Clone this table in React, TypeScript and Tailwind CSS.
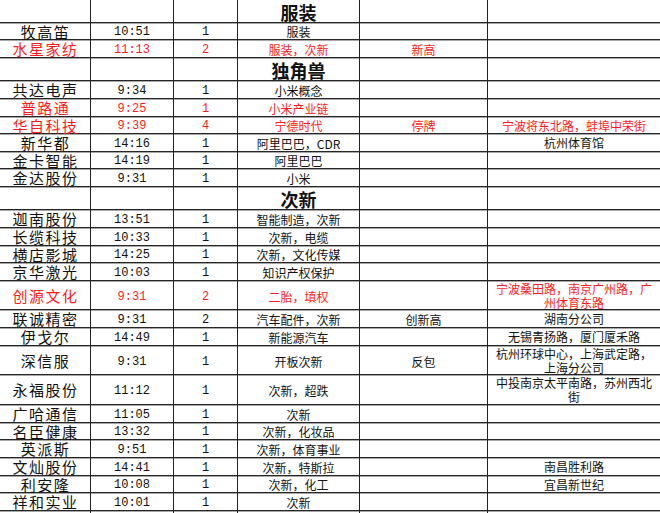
import React from "react";

type Row = {
  h: number;
  header?: string;
  name?: string;
  time?: string;
  n?: string;
  concept?: string;
  c5?: string;
  c6?: string[];
  red?: boolean;
};

const rows: Row[] = [
  { h: 23, header: "服装" },
  { h: 17, name: "牧高笛", time: "10:51", n: "1", concept: "服装" },
  { h: 18, name: "水星家纺", time: "11:13", n: "2", concept: "服装，次新", c5: "新高", red: true },
  { h: 23, header: "独角兽" },
  { h: 18, name: "共达电声", time: "9:34", n: "1", concept: "小米概念" },
  { h: 18, name: "普路通", time: "9:25", n: "1", concept: "小米产业链", red: true },
  { h: 17, name: "华自科技", time: "9:39", n: "4", concept: "宁德时代", c5: "停牌", c6: ["宁波将东北路，蚌埠中荣街"], red: true },
  { h: 18, name: "新华都", time: "14:16", n: "1", concept: "阿里巴巴，CDR", c6: ["杭州体育馆"] },
  { h: 17, name: "金卡智能", time: "14:19", n: "1", concept: "阿里巴巴" },
  { h: 18, name: "金达股份", time: "9:31", n: "1", concept: "小米" },
  { h: 23, header: "次新" },
  { h: 18, name: "迦南股份", time: "13:51", n: "1", concept: "智能制造，次新" },
  { h: 18, name: "长缆科技", time: "10:33", n: "1", concept: "次新，电缆" },
  { h: 17, name: "横店影城", time: "14:25", n: "1", concept: "次新，文化传媒" },
  { h: 18, name: "京华激光", time: "10:03", n: "1", concept: "知识产权保护" },
  { h: 29, name: "创源文化", time: "9:31", n: "2", concept: "二胎，填权", c6: ["宁波桑田路，南京广州路，广", "州体育东路"], red: true },
  { h: 18, name: "联诚精密", time: "9:31", n: "2", concept: "汽车配件，次新", c5: "创新高", c6: ["湖南分公司"] },
  { h: 18, name: "伊戈尔", time: "14:49", n: "1", concept: "新能源汽车", c6: ["无锡青扬路，厦门厦禾路"] },
  { h: 29, name: "深信服", time: "9:31", n: "1", concept: "开板次新", c5: "反包", c6: ["杭州环球中心，上海武定路，", "上海分公司"] },
  { h: 30, name: "永福股份", time: "11:12", n: "1", concept: "次新，超跌", c6: ["中投南京太平南路，苏州西北", "街"] },
  { h: 18, name: "广哈通信", time: "11:05", n: "1", concept: "次新" },
  { h: 17, name: "名臣健康", time: "13:32", n: "1", concept: "次新，化妆品" },
  { h: 18, name: "英派斯", time: "9:51", n: "1", concept: "次新，体育事业" },
  { h: 18, name: "文灿股份", time: "14:41", n: "1", concept: "次新，特斯拉", c6: ["南昌胜利路"] },
  { h: 17, name: "利安隆", time: "10:08", n: "1", concept: "次新，化工", c6: ["宜昌新世纪"] },
  { h: 18, name: "祥和实业", time: "10:01", n: "1", concept: "次新" },
  { h: 20 },
];

const cjk = "font-['Noto_Sans_CJK_SC','Noto_Sans',sans-serif]";
const mono = "font-['Liberation_Mono','DejaVu_Sans_Mono',monospace]";

function Cell({ children, className = "" }: { children?: React.ReactNode; className?: string }) {
  return (
    <div className={`flex items-center justify-center overflow-visible whitespace-nowrap border-l border-[#222] ${className}`}>
      {children}
    </div>
  );
}

export default function App() {
  return (
    <div className="w-[660px] h-[513px] overflow-hidden bg-white">
      {rows.map((r, i) => {
        const color = r.red ? "text-[#ff1a1a]" : "text-[#111]";
        return (
          <div
            key={i}
            className="grid grid-cols-[90px_83px_64px_122px_128px_173px] border-b border-[#262626] shadow-[0_1px_0_#a8a8a8]"
            style={{ height: r.h }}
          >
            <div className={`flex items-center justify-center whitespace-nowrap pl-[1px] text-[15px] tracking-[1.5px] leading-none ${cjk} ${color}`}>
              {r.name}
            </div>
            <Cell className={`pt-[2px] text-[12px] leading-none ${mono} ${color}`}>{r.time}</Cell>
            <Cell className={`pt-[2px] text-[12px] leading-none ${mono} ${color}`}>{r.n}</Cell>
            {r.header ? (
              <Cell className={`pt-[1px] text-[18px] font-bold leading-none text-[#111] ${cjk}`}>{r.header}</Cell>
            ) : (
              <Cell className={`pt-[2px] text-[12px] leading-none ${cjk} ${color}`}>{r.concept}</Cell>
            )}
            <Cell className={`pt-[2px] text-[12px] leading-none ${cjk} ${color}`}>{r.c5}</Cell>
            <Cell className={`flex-col pt-[1px] text-[12px] leading-[14px] ${cjk} ${color}`}>
              {r.c6?.map((t, j) => (
                <span key={j}>{t}</span>
              ))}
            </Cell>
          </div>
        );
      })}
    </div>
  );
}
